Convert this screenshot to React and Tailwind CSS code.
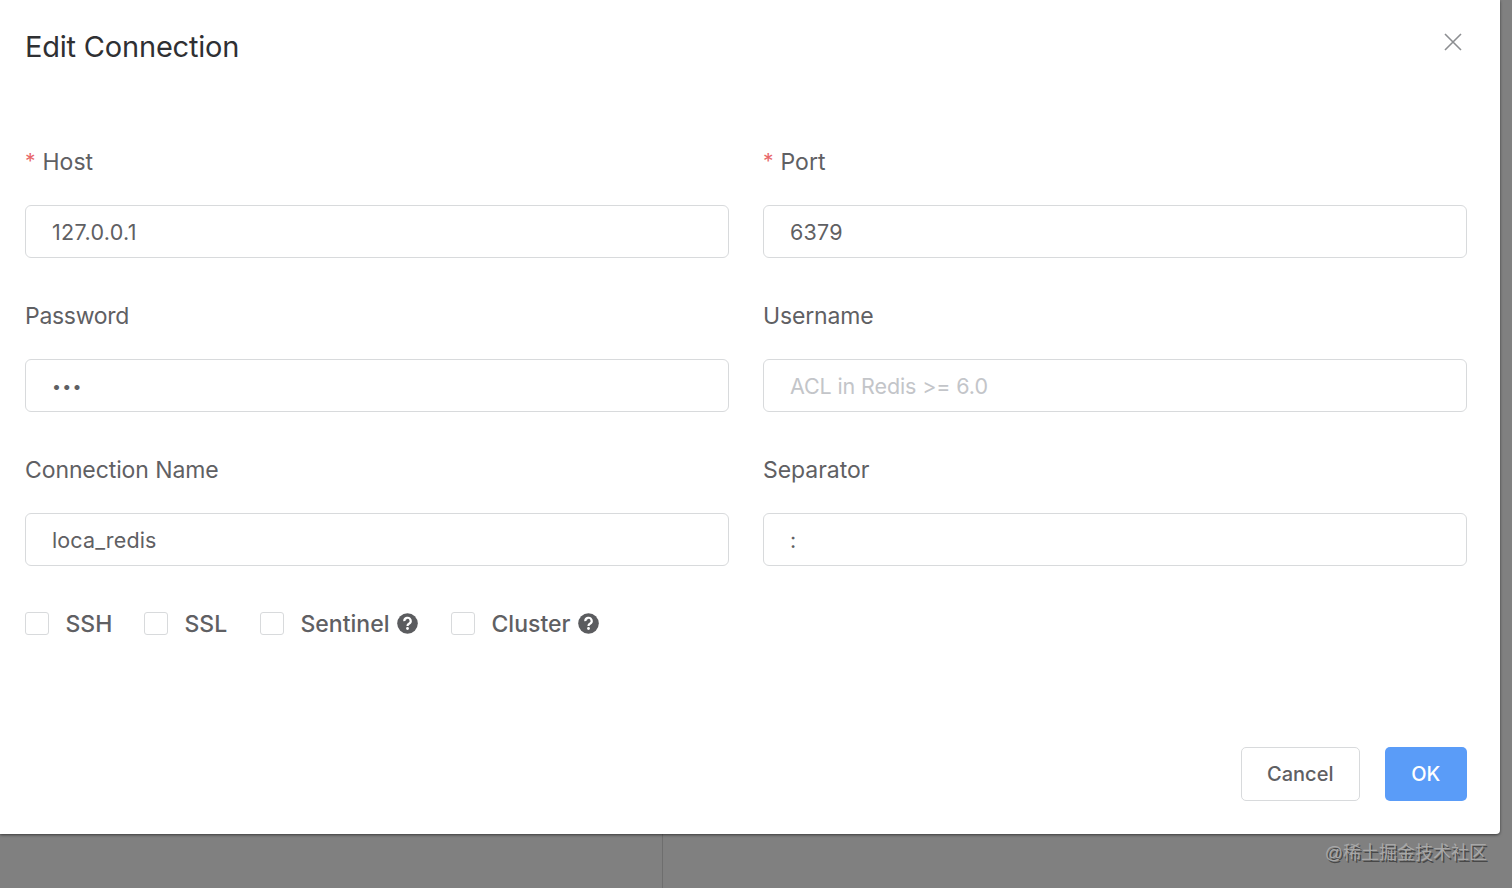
import clsx from 'clsx';

const FIELDS = [
  { label: 'Host', value: '127.0.0.1', required: true, labelCls: 'tracking-[0px]', cls: 'tracking-[0.35px]' },
  { label: 'Port', value: '6379', required: true, labelCls: 'tracking-[0px]', cls: 'tracking-[0.2px]' },
  { label: 'Password', value: '•••', labelCls: 'tracking-[-0.3px]', cls: 'text-[16px] tracking-[1.3px]' },
  { label: 'Username', placeholder: 'ACL in Redis >= 6.0', labelCls: 'tracking-[-0.15px]', cls: 'tracking-[-0.12px]' },
  { label: 'Connection Name', value: 'loca_redis', labelCls: 'tracking-[-0.1px]', cls: 'tracking-[0.13px]' },
  { label: 'Separator', value: ':', labelCls: 'tracking-[-0.05px]', cls: 'tracking-[0px]' },
];

const OPTIONS = [
  { label: 'SSH', width: 'w-[119px]' },
  { label: 'SSL', width: 'w-[116px]' },
  { label: 'Sentinel', width: 'w-[191px]', help: true },
  { label: 'Cluster', width: 'w-[150px]', help: true },
];

function HelpIcon() {
  return (
    <svg width="21" height="21" viewBox="0 0 21 21" className="mb-px ml-2 shrink-0">
      <circle cx="10.5" cy="10.5" r="10.3" fill="#5b5c5f" />
      <path d="M7.3 8.1a3.2 3.2 0 1 1 4.7 2.7c-1 .6-1.5 1-1.5 2.1" fill="none" stroke="#fff" strokeWidth="2.2" />
      <circle cx="10.5" cy="15.5" r="1.4" fill="#fff" />
    </svg>
  );
}

function Field({ label, value, placeholder, required, labelCls, cls }) {
  return (
    <div className="h-[154px]">
      <div className="flex h-[66px] items-start pt-[6.5px] text-[23px] leading-8 text-[#5f6063]">
        {required && <span className="mr-[7px] text-[21px] text-[#e8686b]">*</span>}
        <span className={clsx('whitespace-nowrap', labelCls)}>{label}</span>
      </div>
      <div className="flex h-[53px] items-center rounded-[6px] border border-[#d8dadc] px-[26px] pt-px text-[21.5px]">
        <span className={clsx('whitespace-nowrap', placeholder ? 'text-[#c3c5c9]' : 'text-[#5f6063]', cls)}>
          {value || placeholder}
        </span>
      </div>
    </div>
  );
}

export default function App() {
  return (
    <div className="flex h-[888px] w-[1512px] flex-col overflow-hidden bg-[#808080] font-['Inter',sans-serif]">
      <div className="relative flex h-[834px] w-[1500px] shrink-0 flex-col rounded-br-[4px] bg-white pr-[33px] pl-[25px] shadow-[0_1px_3px_rgba(0,0,0,0.55)]">
        {/* Header */}
        <div className="flex h-[139px] items-start justify-between">
          <h1 className="pt-[27px] text-[29px] leading-10 tracking-[-0.2px] text-[#2f3033]">Edit Connection</h1>
          <svg width="18" height="18" viewBox="0 0 18 18" className="mt-[33px] mr-[5px]">
            <path d="M1 1 17 17M17 1 1 17" fill="none" stroke="#8c8e91" strokeWidth="1.6" />
          </svg>
        </div>

        {/* Connection fields */}
        <div className="grid grid-cols-[704px_704px] gap-x-[34px]">
          {FIELDS.map((f) => <Field key={f.label} {...f} />)}
        </div>

        {/* Options */}
        <div className="flex h-[46px] items-center">
          {OPTIONS.map(({ label, width, help }) => (
            <label key={label} className={clsx('flex shrink-0 items-center', width)}>
              <span className="mb-px size-[23.5px] shrink-0 rounded-[3px] border border-[#d8dadc]" />
              <span className="ml-[17px] text-[23px] font-medium text-[#5f6063]">{label}</span>
              {help && <HelpIcon />}
            </label>
          ))}
        </div>

        {/* Footer */}
        <div className="mt-[100px] flex justify-end gap-[25px]">
          <button className="h-[54px] w-[118.5px] rounded-[5px] border border-[#d8dadc] text-[20px] font-medium text-[#5f6063]">
            Cancel
          </button>
          <button className="h-[54px] w-[82.5px] rounded-[5px] bg-[#5a9cf8] text-[20px] font-medium text-white">
            OK
          </button>
        </div>
      </div>

      {/* Page behind the dialog */}
      <div className="flex flex-1">
        <div className="w-[663px] border-r border-[#6e6e6e]" />
        <div className="flex flex-1 justify-end pt-[5px] pr-[25px]">
          <span className="font-['Liberation_Sans','Noto_Sans_CJK_SC',sans-serif] text-[18px] leading-7 text-[#a8a8a8] [text-shadow:1.5px_1.5px_0.5px_#484848]">
            @稀土掘金技术社区
          </span>
        </div>
      </div>
    </div>
  );
}
